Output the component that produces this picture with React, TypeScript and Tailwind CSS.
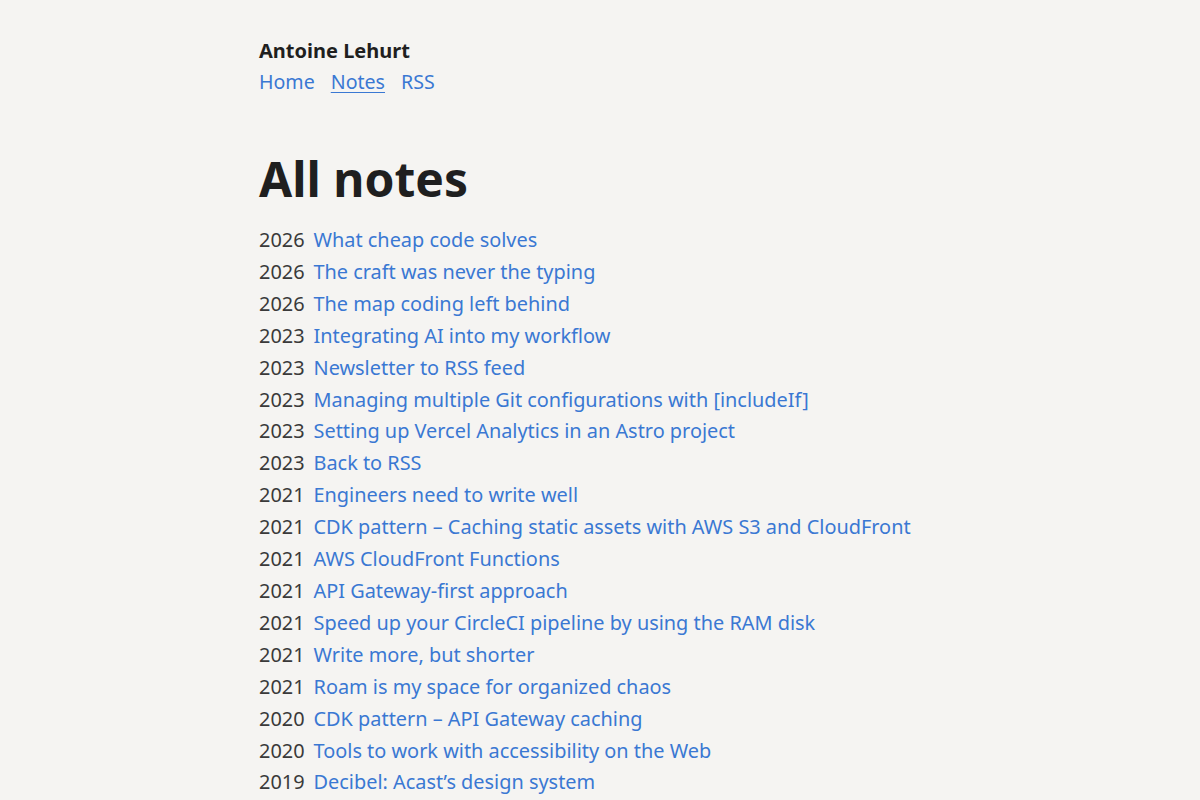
const notes: [string, string][] = [
  ["2026", "What cheap code solves"],
  ["2026", "The craft was never the typing"],
  ["2026", "The map coding left behind"],
  ["2023", "Integrating AI into my workflow"],
  ["2023", "Newsletter to RSS feed"],
  ["2023", "Managing multiple Git configurations with [includeIf]"],
  ["2023", "Setting up Vercel Analytics in an Astro project"],
  ["2023", "Back to RSS"],
  ["2021", "Engineers need to write well"],
  ["2021", "CDK pattern – Caching static assets with AWS S3 and CloudFront"],
  ["2021", "AWS CloudFront Functions"],
  ["2021", "API Gateway-first approach"],
  ["2021", "Speed up your CircleCI pipeline by using the RAM disk"],
  ["2021", "Write more, but shorter"],
  ["2021", "Roam is my space for organized chaos"],
  ["2020", "CDK pattern – API Gateway caching"],
  ["2020", "Tools to work with accessibility on the Web"],
  ["2019", "Decibel: Acast’s design system"],
  ["2019", "Notes on building a design system"],
  ["2018", "Writing a blog again"],
];

export default function App() {
  return (
    <div className="min-h-screen bg-[#f5f4f2] font-['Noto_Sans',sans-serif] text-[#222]">
      <div className="mx-auto w-[682px] pt-[37px]">
        <header>
          <p className="text-[20px] font-bold leading-[28px] text-[#1f1f1f]">Antoine Lehurt</p>
          <nav className="mt-[1px] flex gap-[16px] text-[19.6px] leading-[32px] text-[#3a78d3]">
            <a href="#">Home</a>
            <a href="#" className="underline underline-offset-[3px]">
              Notes
            </a>
            <a href="#">RSS</a>
          </nav>
        </header>
        <main className="mt-[49px]">
          <h1 className="text-[48px] font-bold leading-[64px] text-[#1f1f1f]">All notes</h1>
          <ul className="mt-[13px] text-[19.9px] leading-[31.9px]">
            {notes.map(([year, title], i) => (
              <li key={i} className="flex gap-[9px]">
                <span className="text-[#3a3a3a]">{year}</span>
                <a href="#" className="text-[#3a78d3]">
                  {title}
                </a>
              </li>
            ))}
          </ul>
        </main>
      </div>
    </div>
  );
}
